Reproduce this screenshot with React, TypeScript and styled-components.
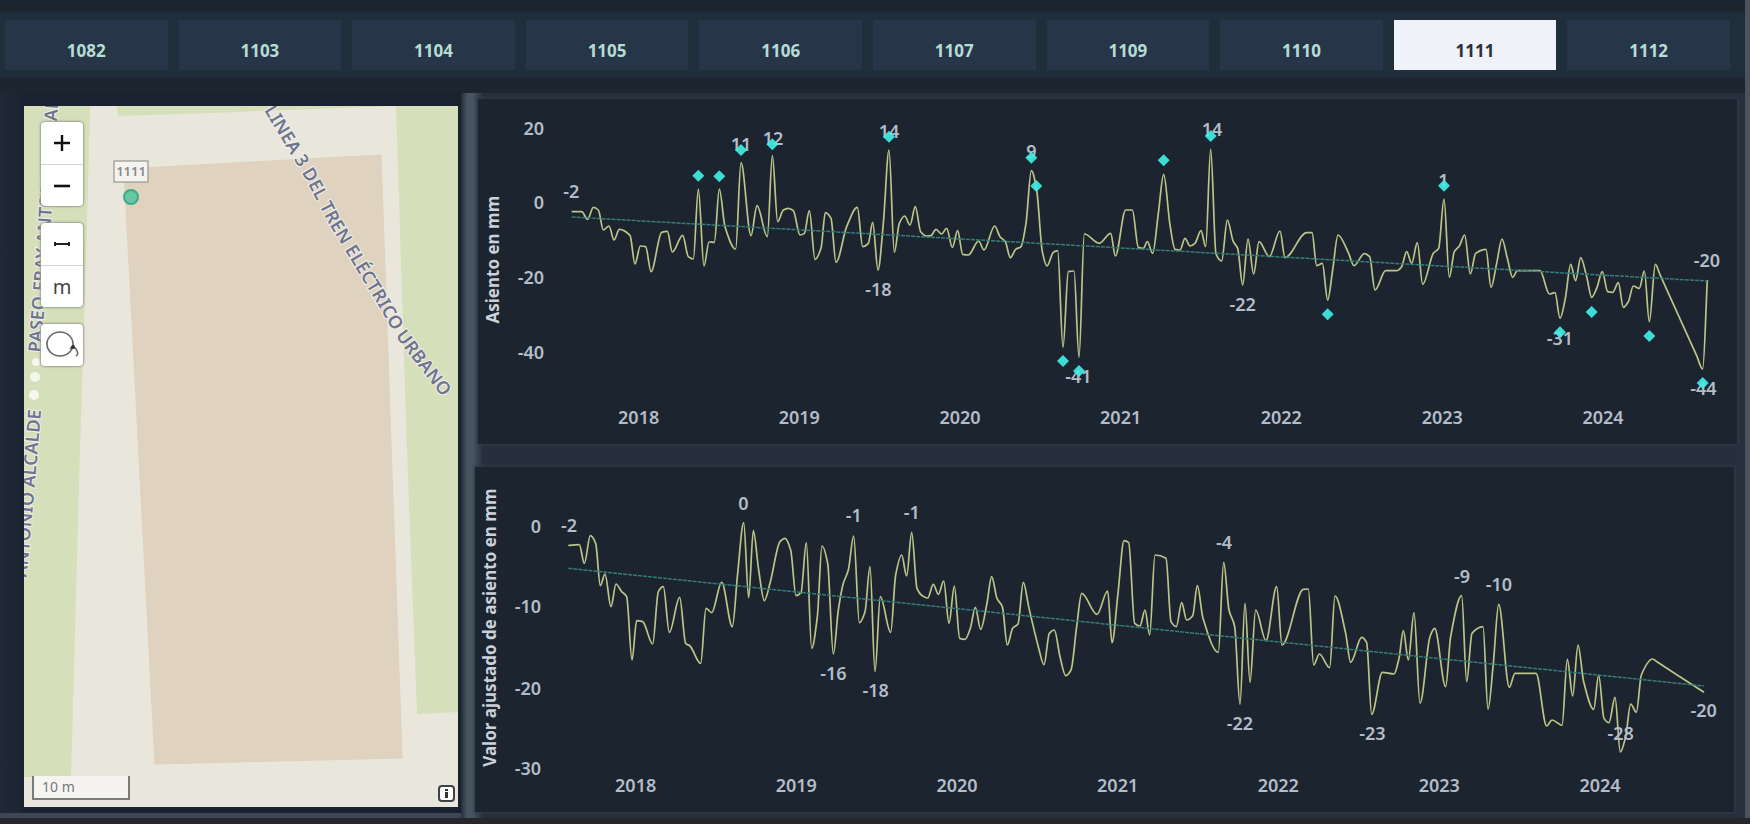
import React, { useLayoutEffect, useRef, useState } from 'react';
import styled, { createGlobalStyle } from 'styled-components';

const GlobalStyle = createGlobalStyle`
  *, *::before, *::after { box-sizing: border-box; }
  body {
    margin: 0;
    background: #26272c;
    color: #bcc6d2;
    font-family: 'Noto Sans', 'Open Sans', sans-serif;
    font-size: 18px;
  }
  button { font: inherit; margin: 0; cursor: pointer; }
`;

/* ---------- page frame ---------- */

const Page = styled.div`
  min-width: 960px;
  padding-top: 13px;
  background: #1d2630;
  border-right: 5px solid #4b535f;
  overflow: hidden;
`;

const TabBar = styled.nav`
  display: flex;
  gap: 11px;
  padding: 7px 15px 7px 5px;
  background: #202d3b;
  box-shadow: 0 0 4px #202d3b;
`;

const Tab = styled.button<{ $active: boolean }>`
  flex: 1;
  height: 50px;
  padding: 12px 0 0;
  border: 0;
  background: ${(p) => (p.$active ? '#eff2f8' : '#273548')};
  color: ${(p) => (p.$active ? '#2b3138' : '#b4ddd3')};
  font-size: 17px;
  font-weight: 700;
  line-height: 24px;
  text-align: center;
`;

const Content = styled.main`
  display: grid;
  grid-template-columns: 461fr 1284fr;
  margin-top: 16px;
`;

const MapColumn = styled.section`
  display: flex;
  padding: 13px 3px 11px 24px;
  background: linear-gradient(to right, #1e2a36 0, #1d2632 16px, #1a2230 24px);
  border-bottom: 5px solid #3c4655;
`;

const ChartColumn = styled.section`
  display: flex;
  flex-direction: column;
  gap: 23px;
  min-width: 0;
  padding: 6px 8px 6px 14px;
  background: linear-gradient(to right, #232d38 0, #485460 6px, #485460 12px, #26303d 22px);
`;

/* ---------- map ---------- */

const MapView = styled.div`
  position: relative;
  flex: 1;
  overflow: hidden;
  background: #e9e6dc;
  margin-bottom: -5px;
`;

const MapDrawing = styled.svg`
  position: absolute;
  inset: 0;
  width: 100%;
  height: 100%;
`;

const MapControls = styled.div`
  position: absolute;
  top: 16px;
  left: 17px;
  display: flex;
  flex-direction: column;
  gap: 17px;
`;

const ControlGroup = styled.div`
  width: 42px;
  border-radius: 4px;
  background: #fff;
  box-shadow: 0 0 2px 1px #9a9f8e;
`;

const ControlButton = styled.button`
  display: flex;
  align-items: center;
  justify-content: center;
  width: 42px;
  height: 42px;
  padding: 0;
  border: 0;
  background: transparent;
  color: #444;
  font-size: 20px;

  & + & { border-top: 1px solid #d4d4d4; }
`;

const ScaleBar = styled.div`
  position: absolute;
  left: 8px;
  bottom: 7px;
  width: 98px;
  height: 24px;
  padding-left: 8px;
  border: 2px solid #7a7a78;
  border-top: 0;
  background: #f5f4f0;
  color: #77777a;
  font-size: 14px;
  line-height: 22px;
`;

const InfoButton = styled.button`
  position: absolute;
  right: 3px;
  bottom: 5px;
  display: flex;
  align-items: center;
  justify-content: center;
  width: 17px;
  height: 17px;
  padding: 0;
  border: 2px solid #3e4244;
  border-radius: 4px;
  background: #fff;
`;

const StreetText = styled.text`
  fill: #70758f;
  stroke: #f1efe9;
  stroke-width: 2px;
  paint-order: stroke;
  font-size: 18px;
  font-weight: 600;
`;

const SensorTag = styled.text`
  fill: #87898a;
  font-size: 13px;
  font-weight: 600;
`;

function StationMap() {
  return (
    <MapView>
      <MapDrawing viewBox="0 0 434 701" preserveAspectRatio="xMidYMid slice" role="img" aria-label="Mapa">
        <defs>
          <path id="line3" d="M240 4 L281 72 L304 116 L328 156 L353 197 L373 232 L384 247 L440 319" />
          <path id="streetUpper" d="M17 247 Q24 160 28 100 T36 -40" />
          <path id="streetLower" d="M-6 560 Q7 430 17 304" />
        </defs>
        <path d="M0 0H66L63 117L56 344L47 671H0Z" fill="#d5dfb9" />
        <path d="M93 0H372L186 7L94 10Z" fill="#d5dfb9" />
        <path d="M372 0H434V606L393 608L383 344Z" fill="#d5dfb9" />
        <path d="M100 63L357 49L378 652L131 658Z" fill="#dfd3bf" stroke="#e0d0bc" strokeWidth="1" />
        <circle cx="12" cy="256" r="4" fill="#f6f6ee" />
        <circle cx="11" cy="271" r="5" fill="#f6f6ee" />
        <circle cx="10" cy="289" r="5" fill="#f6f6ee" />
        <StreetText><textPath href="#line3">LINEA 3 DEL TREN ELÉCTRICO URBANO</textPath></StreetText>
        <StreetText><textPath href="#streetUpper">PASEO FRAY ANTONIO ALCALDE</textPath></StreetText>
        <StreetText textAnchor="end"><textPath href="#streetLower" startOffset="100%">ANTONIO ALCALDE</textPath></StreetText>
        <rect x="90" y="55" width="34" height="21" fill="#f4f3f0" stroke="#85867f" strokeWidth="1" />
        <SensorTag x="107" y="70" textAnchor="middle">1111</SensorTag>
        <circle cx="107" cy="91" r="7" fill="#68c6a2" stroke="#3da88a" strokeWidth="2" />
      </MapDrawing>
      <MapControls>
        <ControlGroup>
          <ControlButton aria-label="Acercar">
            <svg width="18" height="18" stroke="#111" strokeWidth="2.4"><path d="M9 1V17M1 9H17" /></svg>
          </ControlButton>
          <ControlButton aria-label="Alejar">
            <svg width="18" height="18" stroke="#111" strokeWidth="2.6"><path d="M1 9H17" /></svg>
          </ControlButton>
        </ControlGroup>
        <ControlGroup>
          <ControlButton aria-label="Medir distancia">
            <svg width="18" height="18" stroke="#222" strokeWidth="2"><path d="M1 9H17M2 7V11M16 7V11" /></svg>
          </ControlButton>
          <ControlButton>m</ControlButton>
        </ControlGroup>
        <ControlGroup>
          <ControlButton aria-label="Seleccionar con lazo">
            <svg width="42" height="42" fill="none" stroke="#666" strokeWidth="1.6">
              <ellipse cx="19" cy="20" rx="13" ry="12" />
              <path d="M29 25C31 22 35 23 36 27C37 29 37 31 35 32" />
              <circle cx="32" cy="23" r="2" fill="#333" stroke="none" />
            </svg>
          </ControlButton>
        </ControlGroup>
      </MapControls>
      <ScaleBar>10 m</ScaleBar>
      <InfoButton aria-label="Información">
        <svg width="5" height="11" fill="#333"><path d="M1 1H4V3H1ZM1 4H4V10H1Z" /></svg>
      </InfoButton>
    </MapView>
  );
}

/* ---------- charts ---------- */

type Point = [number, number];
type Label = [number, number, string];

interface ChartData {
  title: string;
  titleY: number;
  axisY: number;
  yTicks: [number, string][];
  line: Point[];
  trend: [Point, Point];
  labels: Label[];
  anomalies: Point[];
}

/* Plot coordinates are stored at three units per pixel of a 1259px wide plot. */
const UNIT = 3;
const PLOT_WIDTH = 1259;
const PLOT_HEIGHT = 345;

/* Moves a stretch of the series from its own origin to the plot's. */
const at = <T extends Point | Label>(dx: number, dy: number, items: T[]): T[] =>
  items.map(([x, y, ...rest]) => [x + dx, y + dy, ...rest] as unknown as T);

const YEARS: [number, string][] = [
  [482, '2018'], [964, '2019'], [1446, '2020'], [1928, '2021'],
  [2410, '2022'], [2893, '2023'], [3375, '2024'],
];

const settlement: ChartData = {
  title: 'Asiento en mm',
  titleY: 482,
  axisY: 976,
  yTicks: [[108, '20'], [330, '0'], [556, '-20'], [780, '-40']],
  trend: [[281, 354], [3688, 546]],
  line: [
    ...at<Point>(-24, -27, [
      [305, 365], [335, 365], [353, 388], [370, 352], [385, 360], [400, 420], [417, 408], [432, 450], [448, 418],
      [480, 436], [495, 522], [511, 468], [527, 470], [543, 545], [575, 427], [592, 424], [607, 486], [638, 436],
      [655, 500], [670, 507], [685, 297], [702, 528], [717, 456], [733, 457], [748, 297], [765, 410], [797, 477],
      [813, 218], [843, 437], [861, 347], [892, 440], [907, 197], [923, 395], [940, 360], [955, 355], [970, 362],
      [990, 435], [1003, 430], [1018, 362], [1035, 508], [1053, 475], [1066, 368], [1083, 385], [1098, 517],
      [1130, 410], [1162, 352], [1178, 470], [1195, 460], [1208, 397], [1224, 540], [1240, 400], [1257, 180],
    ]),
    ...at<Point>(1206, -27, [
      [43, 487], [58, 400], [74, 378], [90, 405], [106, 350], [122, 425], [140, 438], [153, 437], [168, 418],
      [185, 432], [200, 415], [217, 472], [233, 422], [248, 493], [265, 495], [296, 453], [312, 480], [344, 408],
      [360, 440], [376, 455], [391, 503], [407, 478], [423, 470], [438, 400], [454, 242], [470, 300], [487, 485],
      [501, 528], [520, 487], [533, 482], [549, 772], [565, 545], [582, 543], [597, 802], [613, 432], [658, 460],
      [692, 430], [706, 498], [737, 360], [757, 360], [775, 472], [790, 475], [802, 455], [818, 490], [835, 370],
      [851, 253], [870, 405], [885, 478], [900, 480], [915, 445], [930, 468], [945, 460], [963, 422], [977, 470],
      [992, 177], [1008, 492], [1025, 513], [1042, 390], [1060, 455], [1073, 475], [1088, 585], [1104, 447],
      [1121, 552], [1137, 455], [1168, 500], [1200, 423], [1215, 503],
    ]),
    ...at<Point>(2466, -27, [
      [20, 428], [36, 428], [50, 527], [67, 520], [83, 630], [98, 540], [114, 435], [145, 488], [162, 527],
      [193, 491], [209, 500], [225, 600], [257, 542], [290, 542], [305, 530], [320, 485], [335, 520], [352, 458],
      [368, 583], [400, 490], [416, 475], [432, 327], [448, 562], [463, 485], [478, 468], [494, 435], [511, 552],
      [527, 490], [558, 478], [573, 592], [590, 520], [606, 447], [622, 505], [638, 562], [652, 542], [720, 542],
      [748, 612], [765, 608], [780, 685], [796, 625], [812, 523], [827, 572], [842, 503], [860, 560], [875, 622],
      [890, 595], [907, 545], [923, 605], [938, 607], [955, 578], [970, 652], [985, 635], [1000, 588], [1018, 595],
      [1033, 543], [1048, 695], [1066, 523], [1080, 554], [1190, 797], [1208, 837], [1222, 570],
    ]),
  ],
  labels: [
    ...at<Label>(-24, -27, [
      [304, 325, '-2'], [813, 183, '11'], [909, 165, '12'], [1257, 143, '14'], [1225, 618, '-18'],
    ]),
    ...at<Label>(1206, -27, [[454, 205, '9'], [595, 880, '-41'], [996, 139, '14'], [1088, 662, '-22']]),
    ...at<Label>(2466, -27, [[430, 290, '1'], [780, 764, '-31'], [1210, 915, '-44'], [1221, 530, '-20']]),
  ],
  anomalies: [
    ...at<Point>(-24, -27, [[685, 257], [748, 259], [813, 180], [907, 163], [1257, 140]]),
    ...at<Point>(1206, -27, [[454, 203], [469, 288], [549, 813], [597, 843], [851, 211], [992, 138]]),
    ...at<Point>(2466, -27, [[432, 287], [83, 673], [780, 727], [875, 666], [1048, 738], [1208, 879]]),
  ],
};

const adjusted: ChartData = {
  title: 'Valor ajustado de asiento en mm',
  titleY: 482,
  axisY: 976,
  yTicks: [[197, '0'], [438, '-10'], [684, '-20'], [925, '-30']],
  trend: [[280, 304], [3687, 657]],
  line: [
    ...at<Point>(-15, -51, [
      [295, 286], [328, 284], [343, 340], [361, 257], [377, 280], [391, 407], [405, 372], [423, 470], [438, 402],
      [455, 425], [470, 440], [486, 630], [500, 512], [518, 515], [548, 582], [565, 425], [580, 410], [598, 547],
      [629, 442], [647, 580], [660, 588], [692, 640], [708, 475], [725, 488], [755, 397], [787, 530], [803, 370],
      [821, 218], [836, 443], [850, 242], [866, 360], [883, 452], [900, 400], [930, 275], [945, 265], [962, 300],
      [978, 437], [993, 428], [1009, 278], [1025, 595], [1042, 500], [1056, 288], [1073, 340], [1090, 612],
      [1105, 480], [1120, 400], [1135, 360], [1151, 258], [1168, 518], [1185, 485], [1200, 350], [1215, 665],
      [1231, 440],
    ]),
    ...at<Point>(1215, -51, [
      [32, 547], [47, 375], [65, 315], [80, 378], [95, 247], [111, 415], [128, 438], [143, 444], [160, 403],
      [175, 433], [191, 393], [207, 520], [223, 408], [239, 565], [255, 568], [271, 535], [286, 472], [302, 538],
      [320, 465], [335, 380], [351, 445], [367, 470], [382, 585], [398, 535], [414, 522], [430, 397], [446, 470],
      [475, 590], [492, 644], [508, 550], [523, 540], [540, 620], [557, 677], [573, 660], [590, 530], [605, 430],
      [651, 493], [683, 423], [696, 578], [714, 430], [732, 272], [746, 278], [764, 520], [780, 528], [795, 480],
      [809, 555], [825, 315], [858, 325], [873, 515], [889, 530], [905, 458], [920, 510], [938, 497], [952, 407],
      [969, 505], [1015, 607], [1031, 337], [1047, 480], [1064, 530], [1080, 763], [1095, 460], [1110, 697],
      [1127, 480], [1158, 572], [1190, 410], [1206, 585],
    ]),
    ...at<Point>(2475, -51, [
      [10, 418], [25, 417], [41, 645], [58, 612], [89, 653], [105, 438], [137, 550], [152, 637], [185, 562],
      [200, 578], [215, 793], [247, 667], [282, 672], [297, 625], [310, 542], [325, 630], [342, 488], [360, 760],
      [390, 560], [404, 535], [437, 710], [452, 560], [485, 437], [500, 695], [516, 550], [549, 530], [564, 778],
      [580, 640], [596, 463], [628, 712], [645, 670], [708, 670], [740, 828], [756, 810], [786, 826], [802, 628],
      [818, 738], [834, 585], [851, 695], [881, 778], [896, 675], [912, 805], [927, 818], [945, 742], [961, 906],
      [977, 860], [992, 762], [1009, 787], [1024, 675], [1058, 627], [1072, 636], [1198, 718], [1212, 727],
    ]),
  ],
  labels: [
    ...at<Label>(-15, -51, [
      [297, 245, '-2'], [820, 180, '0'], [1151, 215, '-1'], [1090, 690, '-16'], [1217, 742, '-18'],
    ]),
    ...at<Label>(1215, -51, [[95, 208, '-1'], [1032, 298, '-4'], [1080, 840, '-22']]),
    ...at<Label>(2475, -51, [
      [217, 870, '-23'], [486, 400, '-9'], [597, 423, '-10'], [962, 870, '-28'], [1211, 802, '-20'],
    ]),
  ],
  anomalies: [],
};

const ChartPanel = styled.figure<{ $shift: 'left' | 'right' }>`
  margin: 0;
  ${(p) => (p.$shift === 'right' ? 'margin-left: 3px;' : 'margin-right: 3px;')}
  background: #1c242f;
  box-shadow: 0 0 3px 1px #303b4a;
`;

const Plot = styled.svg`
  display: block;
  width: 100%;
  height: ${PLOT_HEIGHT}px;
`;

const PlotText = styled.text`
  fill: #b3bcc9;
  font-size: 18px;
  font-weight: 600;
`;

const AxisTitle = styled(PlotText)`
  fill: #c9d1da;
  font-size: 17px;
  font-weight: 700;
`;

/* Monotone cubic path, so that a peak never overshoots its sample. */
function smoothPath(points: Point[]): string {
  const slope = points.slice(1).map(([x, y], i) => (y - points[i][1]) / (x - points[i][0]));
  const tangent = points.map((_, i) => {
    if (i === 0) return slope[0];
    if (i === points.length - 1) return slope[i - 1];
    const a = slope[i - 1];
    const b = slope[i];
    return a * b <= 0 ? 0 : (2 * a * b) / (a + b);
  });
  return points.slice(1).reduce((d, [x, y], i) => {
    const [px, py] = points[i];
    const h = (x - px) / 3;
    return `${d}C${px + h} ${py + h * tangent[i]} ${x - h} ${y - h * tangent[i + 1]} ${x} ${y}`;
  }, `M${points[0][0]} ${points[0][1]}`);
}

function Chart({ data, shift }: { data: ChartData; shift: 'left' | 'right' }) {
  const ref = useRef<SVGSVGElement>(null);
  const [width, setWidth] = useState(PLOT_WIDTH);

  useLayoutEffect(() => {
    const node = ref.current;
    if (!node) return;
    const measure = () => setWidth(node.getBoundingClientRect().width);
    measure();
    const observer = new ResizeObserver(measure);
    observer.observe(node);
    return () => observer.disconnect();
  }, []);

  const sx = (x: number) => (x / UNIT) * (width / PLOT_WIDTH);
  const sy = (y: number) => y / UNIT;
  const [start, end] = data.trend;

  return (
    <ChartPanel $shift={shift}>
      <Plot ref={ref} role="img" aria-label={data.title}>
        <AxisTitle textAnchor="middle" transform={`translate(21 ${sy(data.titleY)}) rotate(-90)`}>
          {data.title}
        </AxisTitle>
        {data.yTicks.map(([y, text]) => (
          <PlotText key={text} x={66} y={sy(y)} textAnchor="end">{text}</PlotText>
        ))}
        {YEARS.map(([x, text]) => (
          <PlotText key={text} x={sx(x)} y={sy(data.axisY)} textAnchor="middle">{text}</PlotText>
        ))}
        <path
          d={smoothPath(data.line.map(([x, y]) => [sx(x), sy(y)]))}
          fill="none" stroke="#bcc488" strokeWidth="1.7" strokeLinejoin="round"
        />
        <line
          x1={sx(start[0])} y1={sy(start[1])} x2={sx(end[0])} y2={sy(end[1])}
          stroke="#357c7a" strokeWidth="1.5" strokeDasharray="4 1"
        />
        {data.labels.map(([x, y, text]) => (
          <PlotText key={`${x}-${text}`} x={sx(x)} y={sy(y)} textAnchor="middle">{text}</PlotText>
        ))}
        {data.anomalies.map(([x, y]) => (
          <path key={x} d={`M${sx(x)} ${sy(y) - 6}l6 6l-6 6l-6 -6Z`} fill="#40eee4" fillOpacity="0.92" />
        ))}
      </Plot>
    </ChartPanel>
  );
}

/* ---------- dashboard ---------- */

const STATIONS = ['1082', '1103', '1104', '1105', '1106', '1107', '1109', '1110', '1111', '1112'];

export default function App() {
  const [station, setStation] = useState('1111');
  return (
    <>
      <GlobalStyle />
      <Page>
        <TabBar>
          {STATIONS.map((id) => (
            <Tab key={id} $active={id === station} aria-pressed={id === station} onClick={() => setStation(id)}>
              {id}
            </Tab>
          ))}
        </TabBar>
        <Content>
          <MapColumn><StationMap /></MapColumn>
          <ChartColumn>
            <Chart data={settlement} shift="right" />
            <Chart data={adjusted} shift="left" />
          </ChartColumn>
        </Content>
      </Page>
    </>
  );
}
